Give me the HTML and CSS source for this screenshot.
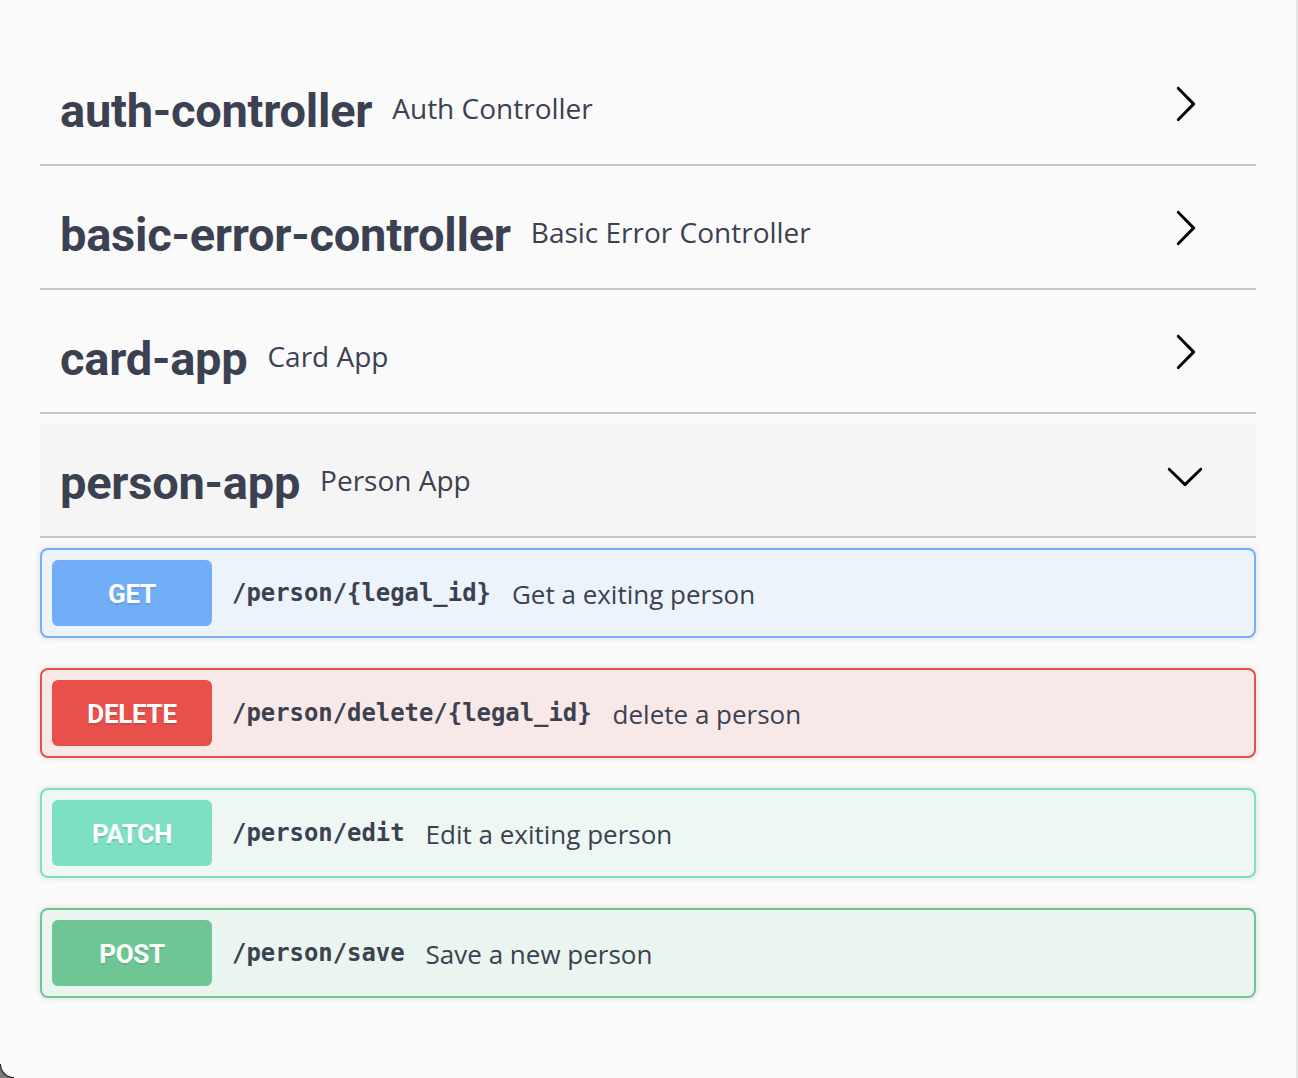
FILE: index.html
```html
<!DOCTYPE html>
<html lang="en">
<head>
<meta charset="utf-8">
<title>Swagger UI</title>
<link rel="stylesheet" href="styles.css">
</head>
<body>
<div class="page">
  <section class="tag">
    <div class="tag-head">
      <h4 class="tag-name">auth-controller</h4>
      <span class="tag-desc">Auth Controller</span>
      <button class="expand" aria-label="expand">
        <svg viewBox="0 0 20 20" width="40" height="40"><path d="M13.25 10L6.109 2.58c-.268-.27-.268-.707 0-.979.268-.27.701-.27.969 0l7.83 7.908c.268.271.268.709 0 .979l-7.830 7.908c-.268.271-.701.27-.969 0-.268-.269-.268-.707 0-.979L13.25 10z"/></svg>
      </button>
    </div>
  </section>
  <section class="tag">
    <div class="tag-head">
      <h4 class="tag-name">basic-error-controller</h4>
      <span class="tag-desc">Basic Error Controller</span>
      <button class="expand" aria-label="expand">
        <svg viewBox="0 0 20 20" width="40" height="40"><path d="M13.25 10L6.109 2.58c-.268-.27-.268-.707 0-.979.268-.27.701-.27.969 0l7.83 7.908c.268.271.268.709 0 .979l-7.83 7.908c-.268.271-.701.27-.969 0-.268-.269-.268-.707 0-.979L13.25 10z"/></svg>
      </button>
    </div>
  </section>
  <section class="tag">
    <div class="tag-head">
      <h4 class="tag-name">card-app</h4>
      <span class="tag-desc">Card App</span>
      <button class="expand" aria-label="expand">
        <svg viewBox="0 0 20 20" width="40" height="40"><path d="M13.25 10L6.109 2.58c-.268-.27-.268-.707 0-.979.268-.27.701-.27.969 0l7.83 7.908c.268.271.268.709 0 .979l-7.83 7.908c-.268.271-.701.27-.969 0-.268-.269-.268-.707 0-.979L13.25 10z"/></svg>
      </button>
    </div>
  </section>
  <section class="tag is-open">
    <div class="tag-head">
      <h4 class="tag-name">person-app</h4>
      <span class="tag-desc">Person App</span>
      <button class="expand" aria-label="collapse">
        <svg viewBox="0 0 20 20" width="40" height="40"><path d="M17.418 6.109c.272-.268.709-.268.979 0s.271.701 0 .969l-7.908 7.83c-.27.268-.707.268-.979 0l-7.908-7.83c-.27-.268-.27-.701 0-.969.271-.268.709-.268.979 0L10 13.25l7.418-7.141z"/></svg>
      </button>
    </div>
    <div class="ops">
      <div class="op op-get">
        <span class="method">GET</span>
        <span class="path">/person/{legal_id}</span>
        <span class="op-desc">Get a exiting person</span>
      </div>
      <div class="op op-delete">
        <span class="method">DELETE</span>
        <span class="path">/person/delete/{legal_id}</span>
        <span class="op-desc">delete a person</span>
      </div>
      <div class="op op-patch">
        <span class="method">PATCH</span>
        <span class="path">/person/edit</span>
        <span class="op-desc">Edit a exiting person</span>
      </div>
      <div class="op op-post">
        <span class="method">POST</span>
        <span class="path">/person/save</span>
        <span class="op-desc">Save a new person</span>
      </div>
    </div>
  </section>
  <div class="corner"></div>
</div>
</body>
</html>
```

FILE: styles.css
```css
* { box-sizing: border-box; }

html, body {
  margin: 0;
  padding: 0;
  background: #fafafa;
}

.page {
  position: relative;
  min-height: 1078px;
  padding: 52px 40px 0 40px;
  border-right: 2px solid #e6e6e6;
  width: 1298px;
  font-family: "Open Sans", "Noto Sans", sans-serif;
  color: #3b4151;
}

.tag {
  margin: 0 0 10px 0;
}

.tag-head {
  display: flex;
  align-items: center;
  height: 114px;
  padding: 0 40px 0 20px;
  border-bottom: 2px solid #c4c6cb;
}

.is-open .tag-head {
  background: #f5f5f5;
}

.tag-name {
  margin: 0;
  font-family: Roboto, "Liberation Sans", sans-serif;
  font-weight: 700;
  font-size: 47px;
  line-height: 1;
  letter-spacing: -0.25px;
  color: #3b4151;
  position: relative;
  top: 2px;
}

.tag-desc {
  flex: 1;
  padding: 0 20px;
  font-size: 28px;
  line-height: 1;
  color: #3b4151;
}

.expand {
  border: 0;
  background: none;
  padding: 0;
  margin: 0 11px 8px 0;
  width: 40px;
  height: 40px;
  display: flex;
}

.expand svg {
  fill: #000;
  display: block;
}

.ops {
  padding-top: 10px;
}

.op {
  display: flex;
  align-items: center;
  height: 90px;
  padding: 0 10px;
  margin: 0 0 30px 0;
  border: 2px solid;
  border-radius: 8px;
  box-shadow: 0 0 6px rgba(0, 0, 0, 0.12);
}

.method {
  width: 160px;
  height: 66px;
  border-radius: 6px;
  display: flex;
  align-items: center;
  justify-content: center;
  color: #fff;
  font-family: Roboto, "Liberation Sans", sans-serif;
  font-weight: 700;
  font-size: 26px;
  letter-spacing: -0.3px;
  text-shadow: 0 2px 0 rgba(0, 0, 0, 0.1);
  padding-top: 2px;
}

.path {
  padding: 0 21px 0 20px;
  font-family: "DejaVu Sans Mono", "Liberation Mono", monospace;
  font-weight: 700;
  font-size: 23.9px;
  color: #3b4151;
}

.op-desc {
  flex: 1;
  font-size: 26px;
  color: #3b4151;
  padding-top: 2px;
}

.op-get { background: #ecf3fb; border-color: #75b0f6; }
.op-get .method { background: #72aef8; }

.op-delete { background: #f9e8e8; border-color: #e8504b; }
.op-delete .method { background: #e8504b; }

.op-patch { background: #eef7f4; border-color: #7ddfc3; }
.op-patch .method { background: #7ddfc3; }

.op-post { background: #ebf5ef; border-color: #6ec695; }
.op-post .method { background: #6ec695; }

.corner {
  position: absolute;
  left: 0;
  bottom: 0;
  width: 14px;
  height: 14px;
  background: radial-gradient(circle at 100% 0, transparent 12.5px, #222 13.5px, #7a7a7a 15px);
}
```
